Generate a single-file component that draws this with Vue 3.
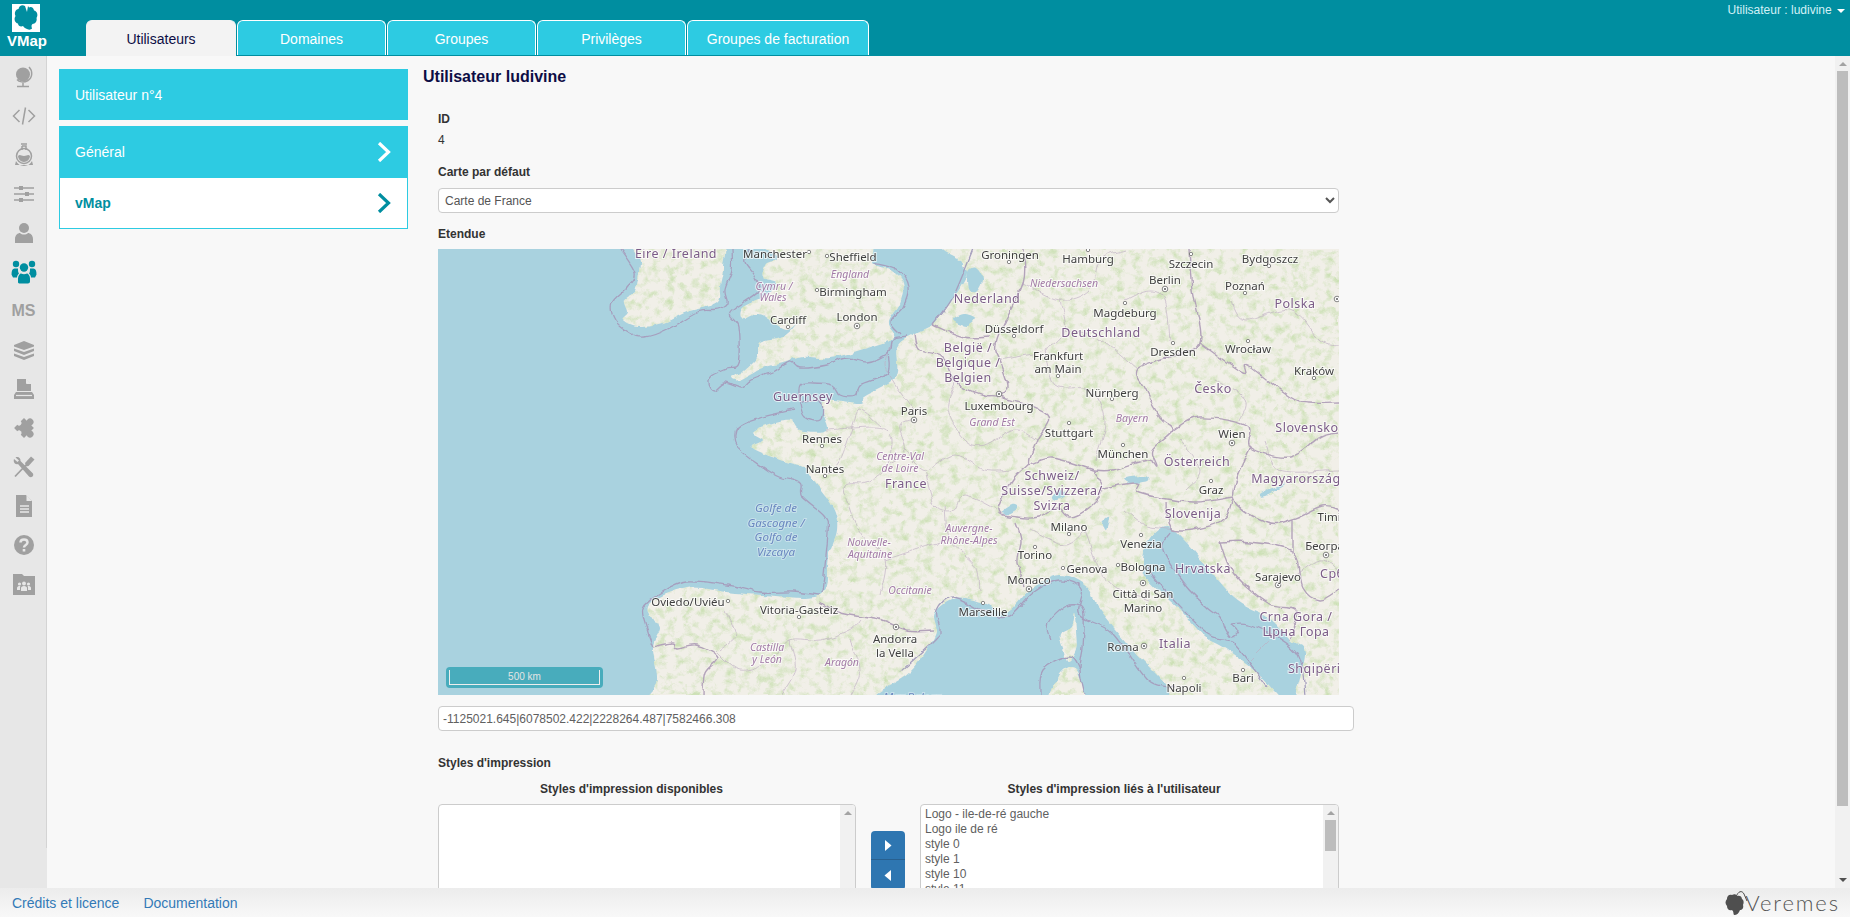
<script setup>
const tabs = ['Utilisateurs', 'Domaines', 'Groupes', 'Privilèges', 'Groupes de facturation']
const styles = ['Logo - ile-de-ré gauche', 'Logo ile de ré', 'style 0', 'style 1', 'style 10', 'style 11', 'style 12']

// Catmull-Rom through the traced points, so that coasts and borders are not angular
function smooth(list, closed) {
  const p = list.trim().split(/\s+/).map((s) => s.split(',').map(Number))
  const n = p.length
  const at = (i) => (closed ? p[(i + n) % n] : p[Math.max(0, Math.min(n - 1, i))])
  let d = `M${p[0][0]} ${p[0][1]}`
  const last = closed ? n : n - 1
  for (let i = 0; i < last; i++) {
    const a = at(i - 1), b = at(i), c = at(i + 1), e = at(i + 2)
    const c1x = b[0] + (c[0] - a[0]) / 6, c1y = b[1] + (c[1] - a[1]) / 6
    const c2x = c[0] - (e[0] - b[0]) / 6, c2y = c[1] - (e[1] - b[1]) / 6
    d += `C${c1x.toFixed(1)} ${c1y.toFixed(1)} ${c2x.toFixed(1)} ${c2y.toFixed(1)} ${c[0]} ${c[1]}`
  }
  return closed ? d + 'Z' : d
}

const land = [
  '973,240 963,263 968,273 957,293 940,317 933,325 913,335 897,347 895,377 863,397 860,403 827,400 823,412 827,430 800,430 790,420 770,424 753,432 763,440 752,448 780,460 803,467 813,480 833,507 837,530 828,557 820,595 763,595 727,592 687,588 650,603 652,620 660,627 653,647 657,680 650,720 865,720 873,696 910,672 935,635 935,613 957,598 983,603 1007,612 1030,590 1060,575 1087,587 1100,610 1133,650 1167,687 1180,720 1285,720 1267,683 1227,650 1205,637 1180,610 1148,580 1143,560 1150,538 1167,527 1187,543 1233,597 1267,617 1290,640 1305,653 1297,720 1370,720 1370,240',
  '636,240 640,262 635,290 625,300 628,312 623,320 638,327 663,323 687,312 717,303 720,287 723,267 717,240',
  '760,240 777,257 767,263 763,277 777,282 773,290 760,298 742,308 743,320 758,315 773,323 787,330 797,323 783,337 760,343 757,357 742,372 732,377 740,380 763,368 783,363 803,357 830,358 860,350 893,338 888,322 900,303 903,283 890,270 873,263 863,240',
  '1075,613 1072,627 1060,635 1063,648 1068,662 1077,650 1077,630',
  '1045,720 1057,677 1070,667 1080,677 1085,720',
].map((s) => smooth(s, true))

const water = [
  '968,272 975,268 982,280 976,292 968,288',
  '953,320 963,314 975,318 966,326',
  '1002,512 1012,505 1018,508 1008,514',
  '1052,496 1060,490 1064,496 1056,500',
  '1272,488 1285,484 1266,495 1260,494',
  '1108,517 1105,530 1102,522',
  '1125,478 1145,476 1147,481 1130,483',
].map((s) => smooth(s, true))

const sea = [
  '620,249 635,273 627,287 612,303 615,320 630,333 645,337 670,328 697,312 717,310 727,303 725,290 732,270 732,249',
  '747,249 745,263 755,277 757,292 730,312 738,327 738,363 727,368 712,375 708,384 714,391 725,383 742,388 752,380 773,372 790,362 800,368 827,365 847,358 867,362 888,353 892,340 907,337',
  '888,353 887,373 860,385 855,396 840,395 832,385 813,383 800,385 800,403 805,417 820,420 822,405 812,400 800,403',
  '873,263 897,270 908,287 903,307 890,322 900,335',
  '933,325 953,297 973,249',
  '793,410 763,417 738,428 738,447 763,467 780,477 800,483 802,497 825,517 828,533 822,593',
  '820,595 793,592 760,592 727,585 687,581 660,593 643,608 647,630 653,647',
  '900,672 935,640 940,630 937,610 953,597 983,610 1007,618 1033,593 1060,580 1082,590 1080,615 1113,633 1148,680 1177,687',
  '1050,640 1048,623 1067,605 1083,610 1083,647 1080,670 1085,696',
  '1040,696 1043,670 1070,657 1080,670',
  '1147,568 1167,593 1207,633 1233,643 1267,687',
  '1170,533 1163,550 1185,585 1207,607 1220,617 1224,627 1231,637 1238,631 1233,624 1257,627 1297,653 1305,696',
].map((s) => smooth(s, false))

const borders = [
  '915,335 920,350 943,357 957,383 983,395 1000,397 1047,415 1037,440 1030,463 1053,458 1093,470',
  '1030,463 1013,480 998,510 1017,517 1038,517 1057,507 1070,517 1090,507 1103,488 1093,470',
  '1023,249 1023,283 997,340 1000,360 1008,387 1000,397',
  '933,325 963,337 990,337',
  '1093,470 1113,470 1147,460 1157,467 1153,450 1173,430 1160,417 1143,387 1137,370 1170,357 1200,343 1193,290 1190,249',
  '1200,343 1243,373 1247,365 1290,397 1310,403 1339,403',
  '1173,430 1200,417 1247,425 1250,447 1290,457 1320,437 1339,433',
  '1250,447 1233,497 1267,523 1293,520 1323,507 1339,510',
  '1103,488 1137,483 1140,493 1193,502 1233,497',
  '1167,503 1173,530 1220,522 1233,498',
  '1220,542 1250,542 1293,552 1303,587 1320,600 1339,590',
  '1220,542 1233,573 1267,603 1297,610 1290,640',
  '1293,520 1293,552',
  '1015,523 1020,540 1017,563 1025,587',
  '820,602 840,613 880,620 907,630 933,630',
  '653,647 673,643 677,648 697,645 718,657 705,673 703,696',
].map((s) => smooth(s, false))

const regions = [
  '827,430 852,428 882,428 892,440 885,470 867,482 845,485 850,510 862,535 885,560 880,595',
  '892,340 885,365 895,385 915,415 900,425 905,450 890,462',
  '880,425 860,410 852,428 840,460 825,478',
  '905,450 925,470 955,455 985,470 1010,470',
  '925,470 935,505 955,510 965,495 998,510',
  '945,505 950,540 975,565 980,590',
  '885,560 930,545 950,540',
  '955,383 948,410 965,440 985,445 1015,430 1037,440',
  '1023,283 1060,300 1090,290 1100,260 1125,250',
  '1060,300 1065,330 1045,350 1000,360',
  '1065,330 1100,340 1137,370',
  '1045,350 1055,385 1090,390 1105,420 1095,460',
  '1125,300 1150,290 1165,300 1170,340',
  '1230,300 1245,320 1290,310 1320,340 1339,345',
  '1215,380 1245,400 1240,420',
  '1180,440 1200,470 1185,490',
  '1265,440 1280,470 1339,470',
  '1125,510 1145,525 1175,530',
  '1085,530 1100,570 1120,590 1150,600',
  '1030,530 1065,545 1085,530',
  '715,650 740,670 770,660 790,640 820,640 850,630 860,620',
  '790,640 795,670 780,696',
  '850,640 860,670 850,696',
  '725,610 735,635 720,650',
  '1290,580 1320,560 1339,570',
  '1250,660 1270,640',
].map((s) => smooth(s, false))

const labels = [
  ['Eire / Ireland', 676, 253, 'n'], ['Manchester', 775, 253, 'c'], ['Sheffield', 853, 256, 'c'], ['England', 850, 274, 'r'],
  ['Cymru /', 774, 286, 'r'], ['Wales', 773, 297, 'r'], ['Birmingham', 853, 291, 'c'], ['Cardiff', 788, 319, 'c'],
  ['London', 857, 316, 'c'], ['Guernsey', 803, 396, 'n'], ['Rennes', 822, 438, 'c'], ['Nantes', 825, 468, 'c'],
  ['Paris', 914, 410, 'c'], ['Centre-Val', 900, 456, 'r'], ['de Loire', 900, 468, 'r'], ['France', 906, 483, 'n'],
  ['Golfe de', 776, 507, 's'], ['Gascogne /', 776, 522, 's'], ['Golfo de', 776, 536, 's'], ['Vizcaya', 776, 551, 's'],
  ['Nouvelle-', 869, 542, 'r'], ['Aquitaine', 870, 554, 'r'], ['Occitanie', 910, 590, 'r'], ['Oviedo/Uviéu', 688, 601, 'c'],
  ['Vitoria-Gasteiz', 799, 609, 'c'], ['Castilla', 767, 647, 'r'], ['y León', 767, 659, 'r'], ['Aragón', 842, 662, 'r'],
  ['Andorra', 895, 638, 'c'], ['la Vella', 895, 652, 'c'], ['Mar Balear', 912, 696, 's'],
  ['Groningen', 1010, 254, 'c'], ['Hamburg', 1088, 258, 'c'], ['Niedersachsen', 1064, 283, 'r'], ['Szczecin', 1191, 263, 'c'],
  ['Bydgoszcz', 1270, 258, 'c'], ['Berlin', 1165, 279, 'c'], ['Poznań', 1245, 285, 'c'], ['Nederland', 987, 298, 'n'],
  ['Polska', 1295, 303, 'n'], ['Magdeburg', 1125, 312, 'c'], ['Düsseldorf', 1014, 328, 'c'], ['Deutschland', 1101, 332, 'n'],
  ['Dresden', 1173, 351, 'c'], ['Wrocław', 1248, 348, 'c'], ['België /', 968, 347, 'n'], ['Belgique /', 968, 362, 'n'],
  ['Belgien', 968, 377, 'n'], ['Frankfurt', 1058, 355, 'c'], ['am Main', 1058, 368, 'c'], ['Kraków', 1314, 370, 'c'],
  ['Česko', 1213, 388, 'n'], ['Nürnberg', 1112, 392, 'c'], ['Luxembourg', 999, 405, 'c'], ['Grand Est', 992, 422, 'r'],
  ['Bayern', 1132, 418, 'r'], ['Stuttgart', 1069, 432, 'c'], ['Slovensko', 1307, 427, 'n'], ['Wien', 1232, 433, 'c'],
  ['München', 1123, 453, 'c'], ['Österreich', 1197, 461, 'n'], ['Schweiz/', 1052, 475, 'n'], ['Suisse/Svizzera/', 1052, 490, 'n'],
  ['Svizra', 1052, 505, 'n'], ['Magyarország', 1296, 478, 'n'], ['Graz', 1211, 489, 'c'], ['Slovenija', 1193, 513, 'n'],
  ['Timișoara', 1344, 516, 'c'], ['Milano', 1069, 526, 'c'], ['Auvergne-', 969, 528, 'r'], ['Rhône-Alpes', 969, 540, 'r'],
  ['Venezia', 1141, 543, 'c'], ['Београд', 1328, 545, 'c'], ['Torino', 1035, 554, 'c'], ['Genova', 1087, 568, 'c'],
  ['Bologna', 1143, 566, 'c'], ['Hrvatska', 1203, 568, 'n'], ['Sarajevo', 1278, 576, 'c'], ['Србија', 1342, 573, 'n'],
  ['Monaco', 1029, 579, 'c'], ['Città di San', 1143, 593, 'c'], ['Marino', 1143, 607, 'c'], ['Marseille', 983, 611, 'c'],
  ['Crna Gora /', 1296, 616, 'n'], ['Црна Гора', 1296, 631, 'n'], ['Italia', 1175, 643, 'n'], ['Roma', 1123, 646, 'c'],
  ['Shqipëria', 1318, 668, 'n'], ['Bari', 1243, 677, 'c'], ['Napoli', 1184, 687, 'c'],
]

const towns = [
  [809, 252], [827, 256], [817, 290], [788, 327], [822, 446], [825, 476], [728, 601], [799, 617], [1009, 262], [1088, 250],
  [1191, 254], [1269, 266], [1245, 293], [1125, 303], [1014, 336], [1173, 343], [1248, 341], [1058, 376], [1314, 378],
  [1112, 399], [1069, 423], [1123, 445], [1211, 481], [1069, 534], [1141, 535], [1035, 547], [1063, 568], [1118, 565],
  [983, 603], [1243, 670], [1184, 678],
]
const capitals = [
  [857, 326], [914, 420], [896, 627], [1165, 289], [1337, 299], [999, 394], [1232, 443], [1326, 555], [1278, 585],
  [1029, 589], [1143, 583], [1144, 646],
]
</script>

<template>
  <div class="page">
    <header class="topbar">
      <div class="brand">
        <svg class="brand-mark" viewBox="0 0 28 28">
          <rect width="28" height="28" fill="#fff" />
          <path d="M13 2C10 0 7 2 6.500 5C3.500 5 2 9 3.500 12C1.500 15 3 19 6 19.500C6 22 9 23 11 22C13 25 18 27 20 24.500C19.500 23 19 21 20.500 20C23 20 25.500 17 24.500 14C26.500 11 25 7 22 6.500C22 4 19 2 17 3.500L16 2L15 8Z" fill="#008ea0" />
        </svg>
        <span class="brand-name">VMap</span>
      </div>
      <nav class="tabs">
        <div v-for="(tab, i) in tabs" :key="tab" class="tab" :class="{ active: i === 0, wide: i === 4 }">{{ tab }}</div>
      </nav>
      <div class="account">Utilisateur : ludivine <span class="caret"></span></div>
    </header>

    <div class="middle">
      <aside class="rail">
        <div class="rail-item">
          <svg viewBox="0 0 24 24"><circle cx="11" cy="9.500" r="7" fill="#a0a0a0" /><path d="M17 2c4 4 3.500 11-1 13.500S7 17 5 14.500M11 18v3M5 21.500h12" fill="none" stroke="#a0a0a0" stroke-width="1.500" /></svg>
        </div>
        <div class="rail-item">
          <svg viewBox="0 0 24 24"><path d="M7.500 6L1.500 12l6 6M16.500 6l6 6-6 6M13.500 3.500l-3 17" fill="none" stroke="#a0a0a0" stroke-width="1.500" /></svg>
        </div>
        <div class="rail-item">
          <svg viewBox="0 0 24 24"><path d="M9 1h6M10 3h4v4M10 3v4" fill="none" stroke="#a0a0a0" stroke-width="1.500" /><circle cx="12" cy="13" r="7.500" fill="none" stroke="#a0a0a0" stroke-width="1.500" /><path d="M6 13c2-2 3 0 6 0s4-2 6 0a6 6 0 0 1-12 0ZM4 18l-1 4h18l-1-4a9 9 0 0 1-16 0Z" fill="#a0a0a0" /></svg>
        </div>
        <div class="rail-item">
          <svg viewBox="0 0 24 24"><path d="M2 6h20M2 12h20M2 18h20" stroke="#a0a0a0" stroke-width="1.300" /><path d="M7 4h4v4H7zM13 10h4v4h-4zM7 16h4v4H7z" fill="#a0a0a0" /></svg>
        </div>
        <div class="rail-item">
          <svg viewBox="0 0 24 24"><circle cx="12" cy="7" r="5" fill="#a0a0a0" /><path d="M3 22v-4c0-4 3-6 5-6 2 2 6 2 8 0 2 0 5 2 5 6v4Z" fill="#a0a0a0" /></svg>
        </div>
        <div class="rail-item">
          <svg class="big" viewBox="0 0 26 24"><circle cx="5" cy="4.500" r="3.200" fill="#008ea0" /><circle cx="21" cy="4.500" r="3.200" fill="#008ea0" /><circle cx="13" cy="8" r="4.200" fill="#008ea0" /><path d="M0.500 15c0-4 1-6 3-6h3.500c0 2 0 4 1 5-1 1-2 2-2 4H2ZM25.500 15c0-4-1-6-3-6H19c0 2 0 4-1 5 1 1 2 2 2 4h4ZM7 23v-4c0-3 2-5 3-5 2 1 4 1 6 0 1 0 3 2 3 5v3c0 1-1 2-2 2H9c-1 0-2-.5-2-1Z" fill="#008ea0" /></svg>
        </div>
        <div class="rail-item rail-text">MS</div>
        <div class="rail-item">
          <svg viewBox="0 0 24 24"><path d="M12 3l10 4v1.500L12 12 2 8.500V7Z" fill="#a0a0a0" /><path d="M2 10.500L12 14l10-3.500v2.500L12 17 2 13ZM2 15.500L12 19l10-3.500V18L12 22 2 18Z" fill="#a0a0a0" /></svg>
        </div>
        <div class="rail-item">
          <svg viewBox="0 0 24 24"><path d="M5 2h9l5 5v7H5Z" fill="#a0a0a0" /><path d="M14.500 2v4.500H19" fill="#e7e7e7" stroke="#e7e7e7" /><path d="M4 15h16l2 3v4H2v-4Z" fill="#a0a0a0" /><path d="M4 18.500h16" stroke="#e7e7e7" stroke-width="1.200" /></svg>
        </div>
        <div class="rail-item">
          <svg viewBox="0 0 24 24">
            <g transform="rotate(45 12 12)">
              <rect x="5" y="5" width="14" height="14" fill="#a0a0a0" />
              <circle cx="12" cy="3.500" r="3.500" fill="#a0a0a0" />
              <circle cx="20.500" cy="12" r="3.500" fill="#a0a0a0" />
              <circle cx="5" cy="12" r="2.500" fill="#e7e7e7" />
              <circle cx="12" cy="19" r="2.500" fill="#e7e7e7" />
            </g>
          </svg>
        </div>
        <div class="rail-item">
          <svg viewBox="0 0 24 24"><path d="M3 21.500L14 10" stroke="#a0a0a0" stroke-width="1.800" /><path d="M13 8l6-6.500 3.500 3-6 6.500-2.500.5Z" fill="#a0a0a0" /><path d="M2 4l3.500 3L7 5.500 3.500 2.500c2.500-1.500 5.500.5 5 3.500L20.500 18c1 1 1 2.500 0 3.500s-2.500 1-3.500 0L6 9C3 10 1 7 2 4Z" fill="#a0a0a0" /></svg>
        </div>
        <div class="rail-item">
          <svg viewBox="0 0 24 24"><path d="M4 1h10l6 6v16H4Z" fill="#a0a0a0" /><path d="M14.500 1v6H20" fill="#e7e7e7" /><path d="M8 12h9M8 15h9M8 18h9" stroke="#e7e7e7" stroke-width="1.300" /></svg>
        </div>
        <div class="rail-item">
          <svg viewBox="0 0 24 24"><circle cx="12" cy="12" r="10" fill="#a0a0a0" /><path d="M8.500 9.500c0-4 7-4 7 0 0 2.500-3.500 2.500-3.500 5" fill="none" stroke="#e7e7e7" stroke-width="2.500" /><path d="M10.700 16h2.600v2.600h-2.600z" fill="#e7e7e7" /></svg>
        </div>
        <div class="rail-item">
          <svg viewBox="0 0 24 24"><path d="M1 2h9l2 2h11v19H1Z" fill="#a0a0a0" /><circle cx="7.500" cy="12" r="1.600" fill="#e7e7e7" /><circle cx="12" cy="11.500" r="1.900" fill="#e7e7e7" /><circle cx="16.500" cy="12" r="1.600" fill="#e7e7e7" /><path d="M5 18v-2c0-1 1-2 2-2h1.500c-.5.500-.5 1-.5 2v2ZM9 19v-3c0-1 1-2 3-2s3 1 3 2v3ZM16 18v-2c0-1 0-1.500-.5-2H17c1 0 2 1 2 2v2Z" fill="#e7e7e7" /></svg>
        </div>
      </aside>

      <main class="content">
        <section class="menu">
          <div class="menu-title">Utilisateur n°4</div>
          <div class="menu-group">
            <div class="menu-row on">
              <span>Général</span>
              <svg class="chev" viewBox="0 0 14 20"><path d="M2 1l9.500 9-9.500 9" fill="none" stroke="currentColor" stroke-width="3.200" /></svg>
            </div>
            <div class="menu-row">
              <span>vMap</span>
              <svg class="chev" viewBox="0 0 14 20"><path d="M2 1l9.500 9-9.500 9" fill="none" stroke="currentColor" stroke-width="3.200" /></svg>
            </div>
          </div>
        </section>

        <section class="detail">
          <h1 class="title">Utilisateur ludivine</h1>
          <form class="form" @submit.prevent>
            <div class="label id-label">ID</div>
            <div class="value">4</div>
            <div class="label select-label">Carte par défaut</div>
            <select class="select"><option>Carte de France</option></select>
            <div class="label map-label">Etendue</div>
            <div class="map">
              <svg viewBox="438 249 901 446" width="901" height="446">
                <defs>
                  <clipPath id="land-clip"><path v-for="(d, i) in land" :key="i" :d="d" /></clipPath>
                  <filter id="mottle" x="0" y="0" width="1" height="1" color-interpolation-filters="sRGB">
                    <feTurbulence type="fractalNoise" baseFrequency="0.12" numOctaves="5" seed="11" />
                    <feColorMatrix type="matrix" values="0 0 0 0 0.80  0 0 0 0 0.88  0 0 0 0 0.71  2.400 0 0 0 -1.080" />
                  </filter>
                  <filter id="wobble" x="0" y="0" width="1" height="1" color-interpolation-filters="sRGB">
                    <feTurbulence type="fractalNoise" baseFrequency="0.07" numOctaves="3" seed="4" result="n" />
                    <feDisplacementMap in="SourceGraphic" in2="n" scale="6" xChannelSelector="R" yChannelSelector="G" />
                  </filter>
                </defs>
                <rect x="438" y="249" width="901" height="446" fill="#a9d2df" />
                <g filter="url(#wobble)">
                  <rect x="438" y="249" width="901" height="446" fill="#a9d2df" />
                  <path v-for="(d, i) in land" :key="'l' + i" :d="d" fill="#f1efe8" />
                  <rect x="438" y="249" width="901" height="446" filter="url(#mottle)" clip-path="url(#land-clip)" />
                  <path v-for="(d, i) in water" :key="'w' + i" :d="d" fill="#a9d2df" />
                  <path v-for="(d, i) in regions" :key="'r' + i" :d="d" class="line-region" />
                  <path v-for="(d, i) in sea" :key="'s' + i" :d="d" class="line-sea" />
                  <path v-for="(d, i) in borders" :key="'b' + i" :d="d" class="line-border" />
                </g>
                <circle v-for="(t, i) in towns" :key="'t' + i" :cx="t[0]" :cy="t[1]" r="1.700" class="town" />
                <g v-for="(c, i) in capitals" :key="'k' + i">
                  <circle :cx="c[0]" :cy="c[1]" r="2.800" class="town" />
                  <circle :cx="c[0]" :cy="c[1]" r="1.100" fill="#666" />
                </g>
                <text v-for="l in labels" :key="l[0] + l[1]" :x="l[1]" :y="l[2]" class="map-text" :class="'k-' + l[3]">{{ l[0] }}</text>
              </svg>
              <div class="scale"><span>500 km</span></div>
            </div>
            <input class="extent" readonly value="-1125021.645|6078502.422|2228264.487|7582466.308" />
            <div class="label styles-label">Styles d'impression</div>
            <div class="dual">
              <div class="dual-col">
                <div class="dual-head">Styles d'impression disponibles</div>
                <div class="listbox">
                  <div class="list-items"></div>
                  <div class="list-bar"><span class="arrow-up"></span></div>
                </div>
              </div>
              <div class="dual-actions">
                <button type="button" class="move first"><svg viewBox="0 0 8 13"><path d="M1 1l6.500 5.500L1 12Z" fill="#fff" /></svg></button>
                <button type="button" class="move"><svg viewBox="0 0 8 13"><path d="M7 1L.5 6.500 7 12Z" fill="#fff" /></svg></button>
              </div>
              <div class="dual-col right">
                <div class="dual-head">Styles d'impression liés à l'utilisateur</div>
                <div class="listbox">
                  <div class="list-items">
                    <div v-for="s in styles" :key="s">{{ s }}</div>
                  </div>
                  <div class="list-bar"><span class="arrow-up"></span><span class="list-thumb"></span></div>
                </div>
              </div>
            </div>
          </form>
        </section>
      </main>

      <div class="pagebar">
        <span class="arrow-up"></span>
        <span class="page-thumb"></span>
        <span class="arrow-down"></span>
      </div>
    </div>

    <footer class="footer">
      <a class="link">Crédits et licence</a>
      <a class="link">Documentation</a>
      <div class="veremes">
        <svg viewBox="0 0 26 26">
          <path d="M7 5c2-1 4-1 5 1 2-1 5 0 5 3 2 1 2 4 1 6 1 3-1 5-3 5-1 3-3 5-6 5-1-2 0-3-2-5-3 1-5-1-5-4-2-2-2-5 0-7 0-3 2-5 5-4Z" fill="#4f4f4f" />
          <path d="M11 7c2-6 6-7 8-3l3 7" fill="none" stroke="#4f4f4f" stroke-width="1" />
        </svg>
        <span>Veremes</span>
      </div>
    </footer>
  </div>
</template>

<style>
html, body { margin: 0; overflow: hidden; }
</style>

<style scoped>
.page {
  width: 1850px;
  height: 917px;
  display: flex;
  flex-direction: column;
  overflow: hidden;
  background: #f8f8f8;
  font-family: "Liberation Sans", Arial, sans-serif;
  font-size: 12px;
  color: #333;
}

.topbar {
  height: 56px;
  flex: none;
  display: flex;
  background: #008ea0;
}
.brand {
  width: 86px;
  flex: none;
  display: flex;
  flex-direction: column;
}
.brand-mark { width: 28px; height: 28px; margin: 4px 0 0 12px; }
.brand-name {
  margin-left: 7px;
  font-size: 15px;
  font-weight: 700;
  line-height: 17px;
  color: #fff;
}
.tabs { display: flex; gap: 1px; margin-top: 20px; align-items: flex-start; }
.tab {
  box-sizing: border-box;
  width: 149px;
  height: 35px;
  background: #2dcbe2;
  border: 1px solid #fff;
  border-bottom: 0;
  border-radius: 6px 6px 0 0;
  color: #fff;
  font-size: 14px;
  line-height: 36px;
  text-align: center;
}
.tab.active { width: 150px; height: 36px; background: #f3f3f3; border-color: #f3f3f3; color: #0d0d45; }
.tab.wide { width: 182px; }
.account {
  margin-left: auto;
  margin-right: 5px;
  height: 20px;
  line-height: 20px;
  color: #d2f1f7;
  white-space: nowrap;
}
.caret {
  display: inline-block;
  margin-left: 2px;
  vertical-align: middle;
  border-top: 4px solid #fff;
  border-left: 4px solid transparent;
  border-right: 4px solid transparent;
}

.middle { flex: 1; min-height: 0; display: flex; }

.rail {
  position: relative;
  box-sizing: border-box;
  width: 47px;
  flex: none;
  padding-top: 1px;
  background: #e7e7e7;
  display: flex;
  flex-direction: column;
}
.rail::after {
  content: "";
  position: absolute;
  top: 0;
  right: 0;
  width: 1px;
  height: 792px;
  background: #d4d4d4;
}
.rail-item {
  height: 39px;
  flex: none;
  display: flex;
  align-items: center;
  justify-content: center;
}
.rail-item svg { width: 24px; height: 24px; }
.rail-item svg.big { width: 26px; height: 25px; }
.rail-text {
  font-size: 16px;
  font-weight: 700;
  color: #a0a0a0;
}

.content { flex: 1; min-width: 0; display: flex; overflow: hidden; }

.menu { width: 349px; flex: none; margin: 13px 0 0 12px; }
.menu-title {
  height: 51px;
  padding-left: 16px;
  background: #2dcbe2;
  color: #fff;
  font-size: 14px;
  line-height: 52px;
}
.menu-group { margin-top: 6px; }
.menu-row {
  box-sizing: border-box;
  height: 51px;
  display: flex;
  align-items: center;
  justify-content: space-between;
  padding: 0 16px 0 15px;
  background: #fff;
  border: 1px solid #2dcbe2;
  border-top: 0;
  color: #008ea0;
  font-size: 14px;
  font-weight: 700;
}
.menu-row.on { height: 52px; background: #2dcbe2; border: 0; color: #fff; font-weight: 400; padding: 0 17px 0 16px; }
.chev { width: 14px; height: 20px; }

.detail { flex: 1; min-width: 0; margin-left: 15px; }
.title {
  margin: 11px 0 0;
  font-size: 16px;
  line-height: 20px;
  font-weight: 700;
  color: #0d0d45;
}
.form { padding-left: 15px; }
.label { font-weight: 700; line-height: 17px; }
.id-label { margin-top: 24px; }
.value { margin-top: 4px; line-height: 17px; }
.select-label { margin-top: 15px; }
.select {
  display: block;
  box-sizing: border-box;
  width: 901px;
  height: 25px;
  margin-top: 7px;
  padding: 0 2px;
  background: #fff;
  border: 1px solid #ccc;
  border-radius: 4px;
  font: 12px "Liberation Sans", Arial, sans-serif;
  color: #555;
}
.map-label { margin-top: 13px; }
.map { position: relative; width: 901px; height: 446px; margin-top: 6px; overflow: hidden; }
.map svg { display: block; filter: blur(0.3px); }
.line-region { fill: none; stroke: #bdaec3; stroke-width: 0.900; opacity: 0.7; }
.line-sea { fill: none; stroke: #a69fbe; stroke-width: 1.300; }
.line-border { fill: none; stroke: #b3a3ba; stroke-width: 1.400; }
.town { fill: #fff; stroke: #6a6a6a; stroke-width: 0.800; }
.map-text {
  font-family: "Noto Sans", sans-serif;
  text-anchor: middle;
  dominant-baseline: central;
  paint-order: stroke;
  stroke: rgba(255, 255, 255, 0.7);
  stroke-width: 2px;
}
.k-c { font-size: 11.500px; fill: #3f3f3f; }
.k-n { font-size: 12.500px; letter-spacing: 0.500px; fill: #7b5c87; }
.k-r { font-size: 10.500px; font-style: italic; fill: #a27ba6; }
.k-s { font-size: 11.500px; font-style: italic; fill: #6a88c0; stroke: rgba(255, 255, 255, 0.35); }
.scale {
  position: absolute;
  left: 8px;
  top: 418px;
  box-sizing: border-box;
  width: 157px;
  height: 21px;
  padding: 3px;
  background: #48acbc;
  border-radius: 4px;
}
.scale span {
  display: block;
  box-sizing: border-box;
  height: 15px;
  border: 1px solid #eee;
  border-top: 0;
  color: #e4e4e4;
  font-size: 10px;
  line-height: 13px;
  text-align: center;
}
.extent {
  display: block;
  box-sizing: border-box;
  width: 916px;
  height: 25px;
  margin-top: 11px;
  padding: 0 4px;
  background: #fff;
  border: 1px solid #ccc;
  border-radius: 4px;
  font: 12px "Liberation Sans", Arial, sans-serif;
  color: #606060;
}
.styles-label { margin-top: 24px; }
.dual { display: flex; margin-top: 9px; }
.dual-col { width: 418px; flex: none; }
.dual-col.right { width: 419px; }
.dual-head { padding-right: 31px; font-weight: 700; line-height: 17px; text-align: center; }
.listbox {
  box-sizing: border-box;
  display: flex;
  height: 200px;
  margin-top: 6px;
  background: #fff;
  border: 1px solid #ccc;
  border-radius: 4px;
  overflow: hidden;
}
.list-items {
  flex: 1;
  padding: 2px 4px;
  color: #606060;
  line-height: 15px;
}
.list-bar {
  position: relative;
  width: 15px;
  flex: none;
  display: flex;
  flex-direction: column;
  align-items: center;
  background: #f1f1f1;
}
.arrow-up, .arrow-down {
  flex: none;
  width: 0;
  border-left: 4px solid transparent;
  border-right: 4px solid transparent;
}
.arrow-up { border-bottom: 4px solid #a3a3a3; margin-top: 6px; }
.arrow-down { border-top: 4px solid #505050; margin-bottom: 6px; }
.list-thumb { width: 11px; height: 31px; margin-top: 5px; background: #bdbdbd; }
.dual-actions {
  width: 34px;
  flex: none;
  margin: 50px 15px 0;
}
.move {
  display: flex;
  align-items: center;
  justify-content: center;
  box-sizing: border-box;
  width: 34px;
  height: 30px;
  padding: 0;
  background: #2e76b1;
  border: 0;
  border-radius: 0 0 4px 4px;
}
.move.first { height: 29px; border-bottom: 1px solid #28608f; border-radius: 4px 4px 0 0; }
.move svg { width: 8px; height: 13px; }

.pagebar {
  width: 15px;
  flex: none;
  display: flex;
  flex-direction: column;
  align-items: center;
  background: #f1f1f1;
}
.page-thumb { width: 11px; height: 735px; margin-top: 5px; background: #bdbdbd; }
.pagebar .arrow-down { margin-top: auto; }

.footer {
  height: 29px;
  flex: none;
  display: flex;
  align-items: center;
  gap: 24px;
  padding: 0 10px 0 12px;
  background: linear-gradient(#ececec, #f8f8f8);
  font-size: 14px;
}
.link { color: #337ab7; }
.veremes {
  margin-left: auto;
  display: flex;
  align-items: center;
  color: #555;
  font-family: Lato, sans-serif;
  font-size: 22px;
  font-weight: 300;
  letter-spacing: 1.900px;
  line-height: 24px;
}
.veremes svg { width: 26px; height: 26px; margin-right: -6px; }
</style>
